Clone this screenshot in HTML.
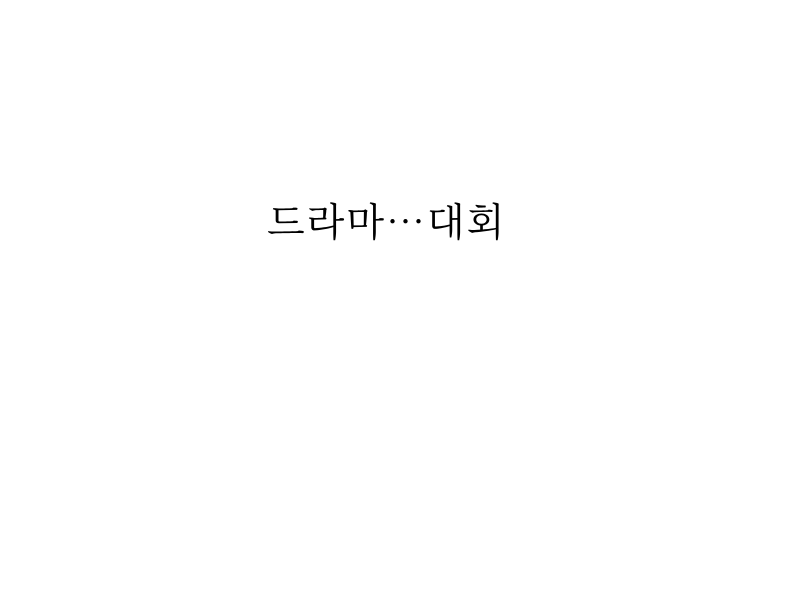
<!DOCTYPE html>
<html><head><meta charset="utf-8"><style>
html,body{margin:0;padding:0;background:#fff;width:800px;height:600px;overflow:hidden}
.t{position:absolute;left:267px;top:195px;font-family:"Noto Serif CJK SC",serif;font-size:39px;line-height:50px;letter-spacing:2px;color:#000;white-space:nowrap}
</style></head><body>
<div class="t">드라마…대회</div>
</body></html>
